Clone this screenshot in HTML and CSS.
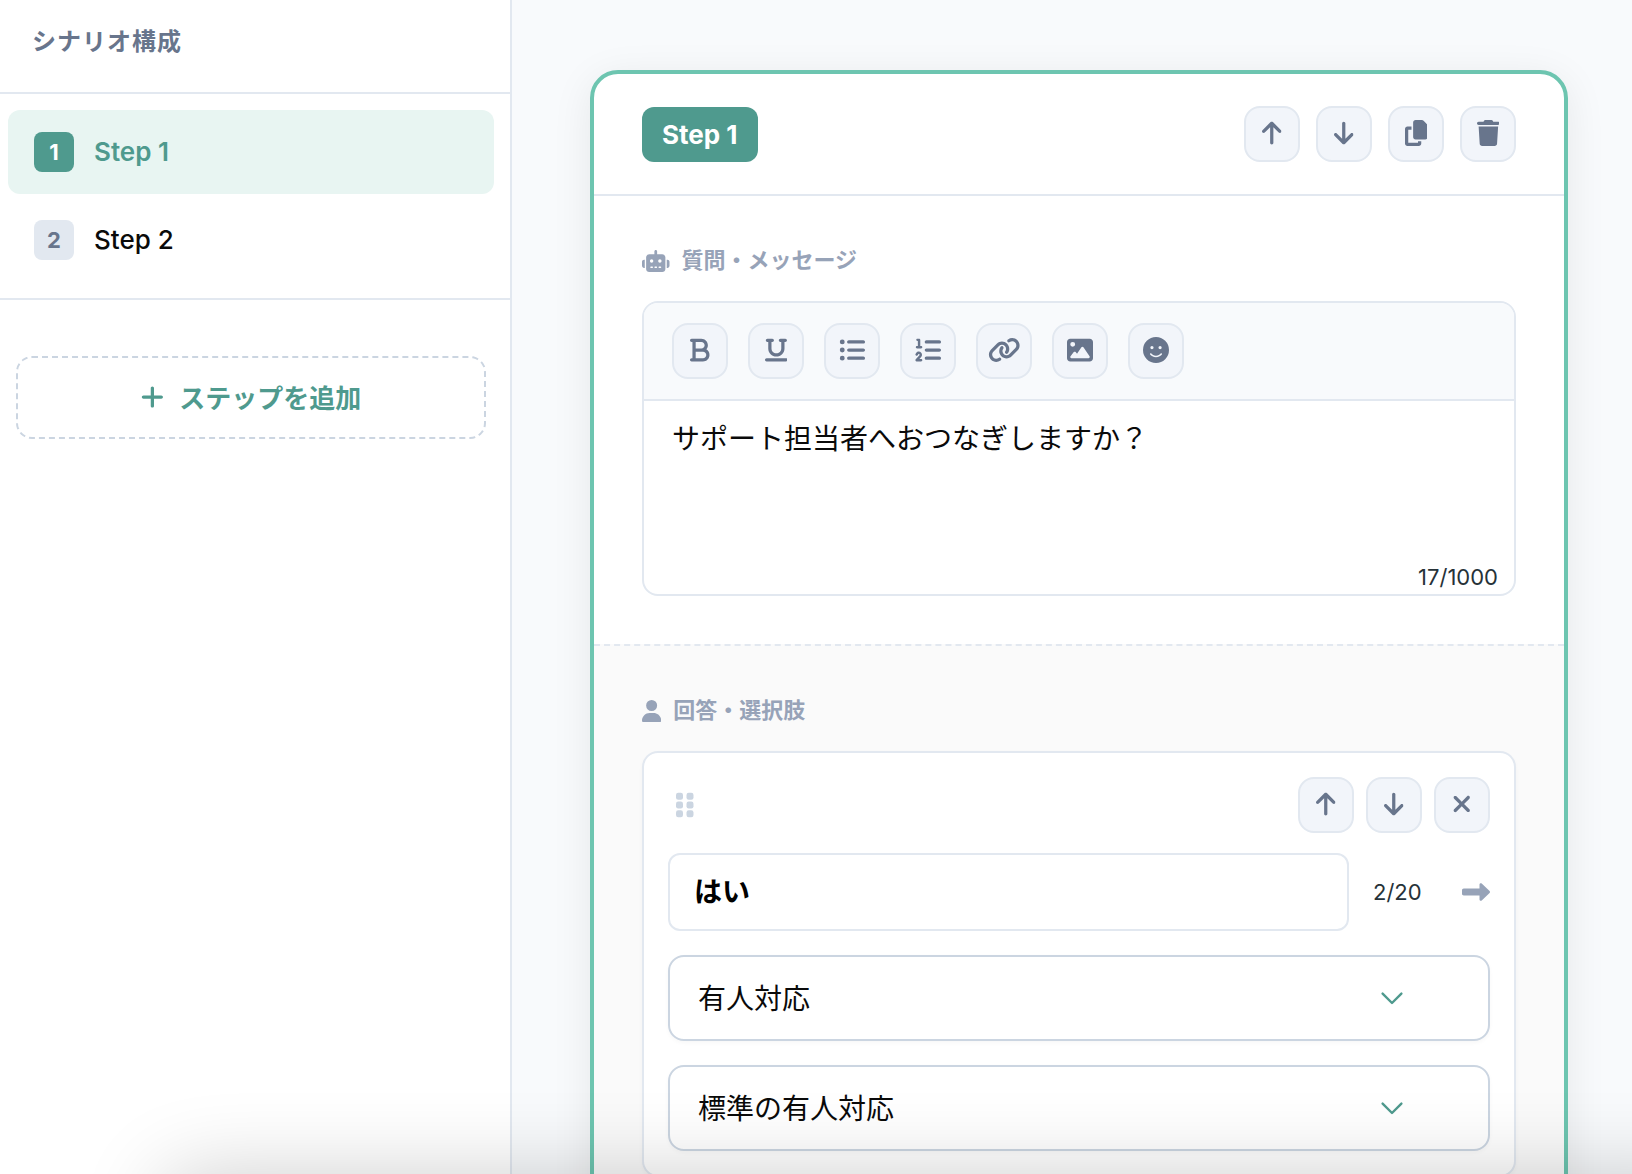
FILE: index.html
```html
<!DOCTYPE html>
<html lang="ja">
<head>
<meta charset="utf-8">
<title>シナリオ構成</title>
<link rel="stylesheet" href="styles.css">
</head>
<body>
<svg class="sprite" aria-hidden="true">
  <symbol id="up" viewBox="0 0 384 512"><path d="M214.6 41.4c-12.5-12.5-32.8-12.5-45.3 0l-160 160c-12.5 12.5-12.5 32.8 0 45.3s32.8 12.5 45.3 0L160 141.2V448c0 17.7 14.3 32 32 32s32-14.3 32-32V141.2L329.4 246.6c12.5 12.5 32.8 12.5 45.3 0s12.5-32.8 0-45.3l-160-160z"/></symbol>
  <symbol id="down" viewBox="0 0 384 512"><path transform="matrix(1 0 0 -1 0 512)" d="M214.6 41.4c-12.5-12.5-32.8-12.5-45.3 0l-160 160c-12.5 12.5-12.5 32.8 0 45.3s32.8 12.5 45.3 0L160 141.2V448c0 17.7 14.3 32 32 32s32-14.3 32-32V141.2L329.4 246.6c12.5 12.5 32.8 12.5 45.3 0s12.5-32.8 0-45.3l-160-160z"/></symbol>
  <symbol id="copy" viewBox="0 0 448 512"><path d="M208 0H332.1c12.7 0 24.9 5.1 33.9 14.1l67.9 67.9c9 9 14.1 21.2 14.1 33.9V336c0 26.5-21.5 48-48 48H208c-26.5 0-48-21.5-48-48V48c0-26.5 21.5-48 48-48zM48 128h80v64H64V448H256V416h64v48c0 26.5-21.5 48-48 48H48c-26.5 0-48-21.5-48-48V176c0-26.5 21.5-48 48-48z"/></symbol>
  <symbol id="trash" viewBox="0 0 448 512"><path d="M135.2 17.7L128 32H32C14.3 32 0 46.3 0 64S14.3 96 32 96H416c17.7 0 32-14.3 32-32s-14.3-32-32-32H320l-7.2-14.3C307.4 6.8 296.3 0 284.2 0H163.8c-12.1 0-23.2 6.8-28.6 17.7zM416 128H32L53.2 467c1.6 25.3 22.6 45 47.9 45H346.9c25.3 0 46.3-19.7 47.9-45L416 128z"/></symbol>
  <symbol id="xmark" viewBox="0 0 384 512"><path d="M342.6 150.6c12.5-12.5 12.5-32.8 0-45.3s-32.8-12.5-45.3 0L192 210.7 86.6 105.4c-12.5-12.5-32.8-12.5-45.3 0s-12.5 32.8 0 45.3L146.7 256 41.4 361.4c-12.5 12.5-12.5 32.8 0 45.3s32.8 12.5 45.3 0L192 301.3 297.4 406.6c12.5 12.5 32.8 12.5 45.3 0s12.5-32.8 0-45.3L237.3 256 342.6 150.6z"/></symbol>
  <symbol id="chevron" viewBox="0 0 24 14"><path d="M2.6 2.6L12 12l9.4-9.4" fill="none" stroke="currentColor" stroke-width="2.4" stroke-linecap="round" stroke-linejoin="round"/></symbol>
</svg>
<div class="app">
  <aside class="sidebar">
    <h1 class="sidebar-title">シナリオ構成</h1>
    <nav class="steps">
      <a class="step step-active"><span class="step-num">1</span><span class="step-name">Step 1</span></a>
      <a class="step"><span class="step-num">2</span><span class="step-name">Step 2</span></a>
    </nav>
    <button class="add-step">
      <svg class="icon" viewBox="0 0 448 512"><path d="M256 80c0-17.7-14.3-32-32-32s-32 14.3-32 32V224H48c-17.7 0-32 14.3-32 32s14.3 32 32 32H192V432c0 17.7 14.3 32 32 32s32-14.3 32-32V288H400c17.7 0 32-14.3 32-32s-14.3-32-32-32H256V80z"/></svg>
      <span>ステップを追加</span>
    </button>
  </aside>
  <main class="main">
    <article class="card">
      <header class="card-head">
        <span class="badge">Step 1</span>
        <div class="actions">
          <button class="btn"><svg class="icon narrow"><use href="#up"/></svg></button>
          <button class="btn"><svg class="icon narrow"><use href="#down"/></svg></button>
          <button class="btn"><svg class="icon mid"><use href="#copy"/></svg></button>
          <button class="btn"><svg class="icon mid"><use href="#trash"/></svg></button>
        </div>
      </header>
      <section class="section question">
        <h2 class="label">
          <svg class="icon" viewBox="0 0 640 512"><path d="M320 0c17.7 0 32 14.3 32 32V96H472c39.8 0 72 32.2 72 72V440c0 39.8-32.2 72-72 72H168c-39.8 0-72-32.2-72-72V168c0-39.8 32.2-72 72-72H288V32c0-17.7 14.3-32 32-32zM208 384c-8.8 0-16 7.2-16 16s7.2 16 16 16h32c8.8 0 16-7.2 16-16s-7.2-16-16-16H208zm96 0c-8.8 0-16 7.2-16 16s7.2 16 16 16h32c8.8 0 16-7.2 16-16s-7.2-16-16-16H304zm96 0c-8.8 0-16 7.2-16 16s7.2 16 16 16h32c8.8 0 16-7.2 16-16s-7.2-16-16-16H400zM264 256a40 40 0 1 0 -80 0 40 40 0 1 0 80 0zm152 40a40 40 0 1 0 0-80 40 40 0 1 0 0 80zM48 224H64V416H48c-26.5 0-48-21.5-48-48V272c0-26.5 21.5-48 48-48zm544 0c26.5 0 48 21.5 48 48v96c0 26.5-21.5 48-48 48H576V224h16z"/></svg>
          <span>質問・メッセージ</span>
        </h2>
        <div class="editor">
          <div class="toolbar">
            <button class="btn"><svg class="icon" viewBox="0 0 384 512"><path d="M0 64C0 46.3 14.3 32 32 32H80 96 224c70.7 0 128 57.3 128 128c0 31.3-11.3 60.1-30 82.3c37.1 22.4 62 63.1 62 109.7c0 70.7-57.3 128-128 128H96 80 32c-17.7 0-32-14.3-32-32s14.3-32 32-32H48V256 96H32C14.3 96 0 81.7 0 64zM224 224c35.3 0 64-28.7 64-64s-28.7-64-64-64H112V224H224zM112 288V416H256c35.3 0 64-28.7 64-64s-28.7-64-64-64H224 112z"/></svg></button>
            <button class="btn"><svg class="icon" viewBox="0 0 448 512"><path d="M16 64c0-17.7 14.3-32 32-32h96c17.7 0 32 14.3 32 32s-14.3 32-32 32H128V224c0 53 43 96 96 96s96-43 96-96V96H304c-17.7 0-32-14.3-32-32s14.3-32 32-32h96c17.7 0 32 14.3 32 32s-14.3 32-32 32H384V224c0 88.4-71.6 160-160 160s-160-71.6-160-160V96H48C30.3 96 16 81.7 16 64zM0 448c0-17.7 14.3-32 32-32H416c17.7 0 32 14.3 32 32s-14.3 32-32 32H32c-17.7 0-32-14.3-32-32z"/></svg></button>
            <button class="btn"><svg class="icon" viewBox="0 0 512 512"><path d="M64 144a48 48 0 1 0 0-96 48 48 0 1 0 0 96zM192 64c-17.7 0-32 14.3-32 32s14.3 32 32 32H480c17.7 0 32-14.3 32-32s-14.3-32-32-32H192zm0 160c-17.7 0-32 14.3-32 32s14.3 32 32 32H480c17.7 0 32-14.3 32-32s-14.3-32-32-32H192zm0 160c-17.7 0-32 14.3-32 32s14.3 32 32 32H480c17.7 0 32-14.3 32-32s-14.3-32-32-32H192zM64 464a48 48 0 1 0 0-96 48 48 0 1 0 0 96zm48-208a48 48 0 1 0 -96 0 48 48 0 1 0 96 0z"/></svg></button>
            <button class="btn"><svg class="icon" viewBox="0 0 512 512"><path d="M24 56c0-13.3 10.7-24 24-24H80c13.3 0 24 10.7 24 24V176h16c13.3 0 24 10.7 24 24s-10.7 24-24 24H40c-13.3 0-24-10.7-24-24s10.7-24 24-24H56V80H48C34.7 80 24 69.3 24 56zM86.7 341.2c-6.5-7.4-18.3-6.9-24 1.2L51.5 357.9c-7.7 10.8-22.7 13.3-33.5 5.6s-13.3-22.7-5.6-33.5l11.1-15.6c23.7-33.2 72.3-35.6 99.2-4.9c21.3 24.4 20.8 60.9-1.1 84.7L86.8 432H120c13.3 0 24 10.7 24 24s-10.7 24-24 24H32c-9.5 0-18.2-5.6-22-14.4s-2.1-18.9 4.3-25.9l72-78c5.3-5.8 5.4-14.6 .3-20.5zM224 64H480c17.7 0 32 14.3 32 32s-14.3 32-32 32H224c-17.7 0-32-14.3-32-32s14.3-32 32-32zm0 160H480c17.7 0 32 14.3 32 32s-14.3 32-32 32H224c-17.7 0-32-14.3-32-32s14.3-32 32-32zm0 160H480c17.7 0 32 14.3 32 32s-14.3 32-32 32H224c-17.7 0-32-14.3-32-32s14.3-32 32-32z"/></svg></button>
            <button class="btn"><svg class="icon" viewBox="0 0 640 512"><path d="M579.8 267.7c56.5-56.5 56.5-148 0-204.5c-50-50-128.8-56.5-186.3-15.4l-1.6 1.1c-14.4 10.3-17.7 30.3-7.4 44.6s30.3 17.7 44.6 7.4l1.6-1.1c32.1-22.9 76-19.3 103.8 8.6c31.5 31.5 31.5 82.5 0 114L422.3 334.8c-31.5 31.5-82.5 31.5-114 0c-27.9-27.9-31.5-71.8-8.6-103.8l1.1-1.6c10.3-14.4 6.9-34.4-7.4-44.6s-34.4-6.9-44.6 7.4l-1.1 1.6C206.5 251.2 213 330 263 380c56.5 56.5 148 56.5 204.5 0L579.8 267.7zM60.2 244.3c-56.5 56.5-56.5 148 0 204.5c50 50 128.8 56.5 186.3 15.4l1.6-1.1c14.4-10.3 17.7-30.3 7.4-44.6s-30.3-17.7-44.6-7.4l-1.6 1.1c-32.1 22.9-76 19.3-103.8-8.6C74 372 74 321 105.5 289.5L217.7 177.2c31.5-31.5 82.5-31.5 114 0c27.9 27.9 31.5 71.8 8.6 103.9l-1.1 1.6c-10.3 14.4-6.9 34.4 7.4 44.6s34.4 6.9 44.6-7.4l1.1-1.6C433.5 260.8 427 182 377 132c-56.5-56.5-148-56.5-204.5 0L60.2 244.3z"/></svg></button>
            <button class="btn"><svg class="icon" viewBox="0 0 512 512"><path d="M0 96C0 60.7 28.7 32 64 32H448c35.3 0 64 28.7 64 64V416c0 35.3-28.7 64-64 64H64c-35.3 0-64-28.7-64-64V96zM323.8 202.5c-4.5-6.6-11.9-10.5-19.8-10.5s-15.4 3.9-19.8 10.5l-87 127.6L170.7 297c-4.6-5.7-11.5-9-18.7-9s-14.2 3.3-18.7 9l-64 80c-5.8 7.2-6.9 17.1-2.9 25.4s12.4 13.6 21.6 13.6h96 32H424c8.9 0 17.1-4.9 21.2-12.8s3.6-17.4-1.4-24.7l-120-176zM112 192a48 48 0 1 0 0-96 48 48 0 1 0 0 96z"/></svg></button>
            <button class="btn"><svg class="icon" viewBox="0 0 512 512"><path d="M256 512A256 256 0 1 0 256 0a256 256 0 1 0 0 512zM164.1 325.5C182 346.2 212.6 368 256 368s74-21.8 91.9-42.5c5.8-6.7 15.9-7.4 22.6-1.6s7.4 15.9 1.6 22.6C349.8 372.1 311.1 400 256 400s-93.8-27.9-116.1-53.5c-5.8-6.7-5.1-16.8 1.6-22.6s16.8-5.1 22.6 1.6zM144.4 208a32 32 0 1 1 64 0 32 32 0 1 1 -64 0zm192-32a32 32 0 1 1 0 64 32 32 0 1 1 0-64z"/></svg></button>
          </div>
          <div class="message">
            <p class="message-text">サポート担当者へおつなぎしますか？</p>
            <span class="counter">17/1000</span>
          </div>
        </div>
      </section>
      <section class="section answers">
        <h2 class="label">
          <svg class="icon" viewBox="0 0 448 512"><path d="M224 256A128 128 0 1 0 224 0a128 128 0 1 0 0 256zm-45.7 48C79.8 304 0 383.8 0 482.3C0 498.7 13.3 512 29.7 512H418.3c16.4 0 29.7-13.3 29.7-29.7C448 383.8 368.2 304 269.7 304H178.3z"/></svg>
          <span>回答・選択肢</span>
        </h2>
        <div class="option">
          <div class="option-head">
            <svg class="icon grip" viewBox="0 0 320 512"><rect y="32" width="128" height="128" rx="40"/><rect x="192" y="32" width="128" height="128" rx="40"/><rect y="192" width="128" height="128" rx="40"/><rect x="192" y="192" width="128" height="128" rx="40"/><rect y="352" width="128" height="128" rx="40"/><rect x="192" y="352" width="128" height="128" rx="40"/></svg>
            <div class="actions actions-tight">
              <button class="btn"><svg class="icon narrow"><use href="#up"/></svg></button>
              <button class="btn"><svg class="icon narrow"><use href="#down"/></svg></button>
              <button class="btn"><svg class="icon narrow"><use href="#xmark"/></svg></button>
            </div>
          </div>
          <div class="option-row">
            <div class="input">はい</div>
            <span class="counter">2/20</span>
            <svg class="icon arrow" viewBox="0 0 512 512"><path d="M334.5 414c8.8 3.8 19 2 26-4.6l144-136c4.8-4.5 7.5-10.8 7.5-17.4s-2.7-12.9-7.5-17.4l-144-136c-7-6.6-17.2-8.4-26-4.6s-14.5 12.5-14.5 22l0 72L32 192c-17.7 0-32 14.3-32 32l0 64c0 17.7 14.3 32 32 32l288 0 0 72c0 9.6 5.7 18.2 14.5 22z"/></svg>
          </div>
          <div class="select"><span>有人対応</span><svg class="chevron"><use href="#chevron"/></svg></div>
          <div class="select"><span>標準の有人対応</span><svg class="chevron"><use href="#chevron"/></svg></div>
        </div>
      </section>
    </article>
  </main>
</div>
<div class="dock-shadow"></div>
</body>
</html>
```
FILE: styles.css
```css
* { box-sizing: border-box; margin: 0; padding: 0; }

body {
  height: 1174px;
  overflow: hidden;
  background: #f8fafc;
  color: #0a0a0a;
  font-family: Inter, "Noto Sans CJK JP", sans-serif;
  font-size: 28px;
}

button { font: inherit; color: inherit; }

.sprite { display: none; }

.icon {
  display: block;
  flex: none;
  height: 26px;
  fill: currentColor;
}
.narrow { width: 19.5px; }
.mid { width: 22.75px; }

.app {
  display: flex;
  height: 1174px;
  overflow: hidden;
}

/* Sidebar */
.sidebar {
  flex: none;
  width: 512px;
  background: #fff;
  border-right: 2px solid #e2e8f0;
}
.sidebar-title {
  height: 94px;
  padding-left: 32px;
  border-bottom: 2px solid #e2e8f0;
  color: #68758c;
  font-size: 24px;
  font-weight: 700;
  letter-spacing: 1px;
  line-height: 84px;
}
.steps {
  display: flex;
  flex-direction: column;
  gap: 4px;
  padding: 16px 16px 16px 8px;
  border-bottom: 2px solid #e2e8f0;
}
.step {
  display: flex;
  align-items: center;
  gap: 20px;
  height: 84px;
  padding: 0 26px;
  border-radius: 12px;
  font-size: 26px;
  font-weight: 500;
}
.step-active { background: #e8f5f2; color: #4f9a8e; font-weight: 600; }
.step-name { padding-bottom: 2px; }
.step-num {
  display: flex;
  align-items: center;
  justify-content: center;
  width: 40px;
  height: 40px;
  border-radius: 8px;
  background: #e2e8f0;
  color: #68758c;
  font-size: 22px;
  font-weight: 700;
}
.step-active .step-num { background: #4f9a8e; color: #fff; }
.add-step {
  display: flex;
  align-items: center;
  justify-content: center;
  gap: 16px;
  width: 470px;
  height: 83px;
  margin: 56px 16px 0;
  padding-bottom: 2px;
  background: none;
  border: 2px dashed #cbd5e1;
  border-radius: 16px;
  color: #4f9a8e;
  font-size: 26px;
  font-weight: 700;
}

/* Step card */
.main { flex: 1; padding: 70px 64px 0 78px; }
.card {
  height: 1400px;
  overflow: hidden;
  background: #fff;
  border: 4px solid #6dc5b0;
  border-radius: 28px;
  box-shadow: 0 8px 40px rgba(0, 0, 0, 0.08);
}
.card-head {
  display: flex;
  align-items: center;
  justify-content: space-between;
  height: 122px;
  padding: 0 48px;
  border-bottom: 2px solid #e2e8f0;
}
.badge {
  padding: 0 20px;
  border-radius: 12px;
  background: #4f9a8e;
  color: #fff;
  font-size: 26px;
  font-weight: 700;
  line-height: 55px;
}
.actions { display: flex; gap: 16px; }
.actions-tight { gap: 12px; }
.btn {
  display: flex;
  align-items: center;
  justify-content: center;
  width: 56px;
  height: 56px;
  padding-bottom: 2px;
  background: #f2f5fa;
  border: 2px solid #e2e8f0;
  border-radius: 16px;
  color: #68758c;
}

.section { padding: 48px 48px; }
.question { height: 448px; }
.label {
  display: flex;
  align-items: center;
  gap: 12px;
  height: 34px;
  margin-bottom: 23px;
  color: #97a3b8;
  font-size: 22px;
  font-weight: 700;
}
.label .icon { height: 22px; }
.label span { padding-bottom: 6px; }

.editor {
  display: flex;
  flex-direction: column;
  height: 295px;
  overflow: hidden;
  border: 2px solid #e2e8f0;
  border-radius: 16px;
}
.toolbar {
  display: flex;
  gap: 20px;
  padding: 20px 28px;
  background: #f8fafc;
  border-bottom: 2px solid #e2e8f0;
}
.message {
  display: flex;
  flex: 1;
  flex-direction: column;
  justify-content: space-between;
  padding: 17px 16px 2px 28px;
}
.message-text { line-height: 42px; }
.counter {
  align-self: flex-end;
  color: #263238;
  font-size: 22px;
  line-height: 30px;
}

/* Answers */
.answers {
  height: 900px;
  background: #fafafa;
  border-top: 2px dashed #e2e8f0;
}
.option {
  display: flex;
  flex-direction: column;
  padding: 24px;
  background: #fff;
  border: 2px solid #e2e8f0;
  border-radius: 16px;
  box-shadow: 0 2px 4px rgba(0, 0, 0, 0.03);
}
.option-head {
  display: flex;
  align-items: center;
  justify-content: space-between;
  margin-bottom: 20px;
  padding-left: 8px;
}
.grip { height: 28px; margin-bottom: 1px; color: #cbd5e1; }
.option-row {
  display: flex;
  align-items: center;
  margin-bottom: 24px;
}
.option-row .counter { align-self: center; width: 48px; margin: 0 41px 0 24px; }
.input {
  flex: 1;
  height: 78px;
  padding-left: 24px;
  border: 2px solid #e2e8f0;
  border-radius: 12px;
  color: #000;
  font-weight: 700;
  line-height: 74px;
}
.arrow { height: 28px; margin-bottom: 1px; color: #97a3b8; }
.select {
  display: flex;
  align-items: center;
  justify-content: space-between;
  height: 86px;
  padding: 0 84px 0 28px;
  border: 2px solid #cbd5e1;
  border-radius: 16px;
  box-shadow: 0 2px 4px rgba(0, 0, 0, 0.03);
}
.select span { padding-bottom: 2px; }
.select + .select { margin-top: 24px; }
.chevron { width: 24px; height: 14px; color: #4f9a8e; }

.dock-shadow {
  position: fixed;
  top: 1176px;
  left: 164px;
  width: 1560px;
  height: 300px;
  border-radius: 24px;
  box-shadow: 0 0 86px rgba(0, 0, 0, 0.2);
  pointer-events: none;
}
```
